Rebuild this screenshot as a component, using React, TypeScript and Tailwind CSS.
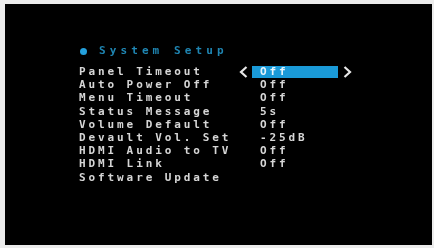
import React from "react";

const rows: [string, string][] = [
  ["Panel Timeout", "Off"],
  ["Auto Power Off", "Off"],
  ["Menu Timeout", "Off"],
  ["Status Message", "5s"],
  ["Volume Default", "Off"],
  ["Devault Vol. Set", "-25dB"],
  ["HDMI Audio to TV", "Off"],
  ["HDMI Link", "Off"],
  ["Software Update", ""],
];

function Chevron({ dir }: { dir: "left" | "right" }) {
  return (
    <svg width="9" height="12" viewBox="0 0 9 12" className="block">
      <polyline
        points={dir === "left" ? "7.5,1 2,6 7.5,11" : "1.5,1 7,6 1.5,11"}
        fill="none"
        stroke="#e8e8e8"
        strokeWidth="2.2"
        strokeLinejoin="miter"
      />
    </svg>
  );
}

export default function App() {
  return (
    <div className="w-[434px] h-[248px] bg-[#ececec] pl-[5px] pt-[4px] pr-[2px] pb-[3px] flex">
      <div
        className="flex-1 bg-black pl-[74px] pt-[41px] text-[11px] font-bold text-[#d6d6d6] blur-[0.35px]"
        style={{ fontFamily: '"DejaVu Sans Mono", monospace' }}
      >
        <div className="flex items-center h-[13px] mb-[7px]">
          <span className="w-[7px] h-[7px] rounded-full bg-[#24a0dc] ml-[1px] mr-[12px]" />
          <span className="tracking-[4.1px] text-[#1f86b3]">System Setup</span>
        </div>
        <div className="flex flex-col">
          {rows.map(([label, value], i) => (
            <div key={label} className="flex items-center h-[13.2px] leading-[13.2px]">
              <span className="w-[160px] whitespace-pre tracking-[2.9px]">{label}</span>
              {i === 0 ? (
                <>
                  <span className="w-[13px] flex items-center">
                    <Chevron dir="left" />
                  </span>
                  <span className="w-[86px] h-[12px] bg-[#1a9ad8] pl-[8px] leading-[12px] tracking-[2.9px] text-[#e6f4fb]">
                    {value}
                  </span>
                  <span className="ml-[5px] flex items-center">
                    <Chevron dir="right" />
                  </span>
                </>
              ) : (
                <span className="pl-[21px] tracking-[2.9px]">{value}</span>
              )}
            </div>
          ))}
        </div>
      </div>
    </div>
  );
}
